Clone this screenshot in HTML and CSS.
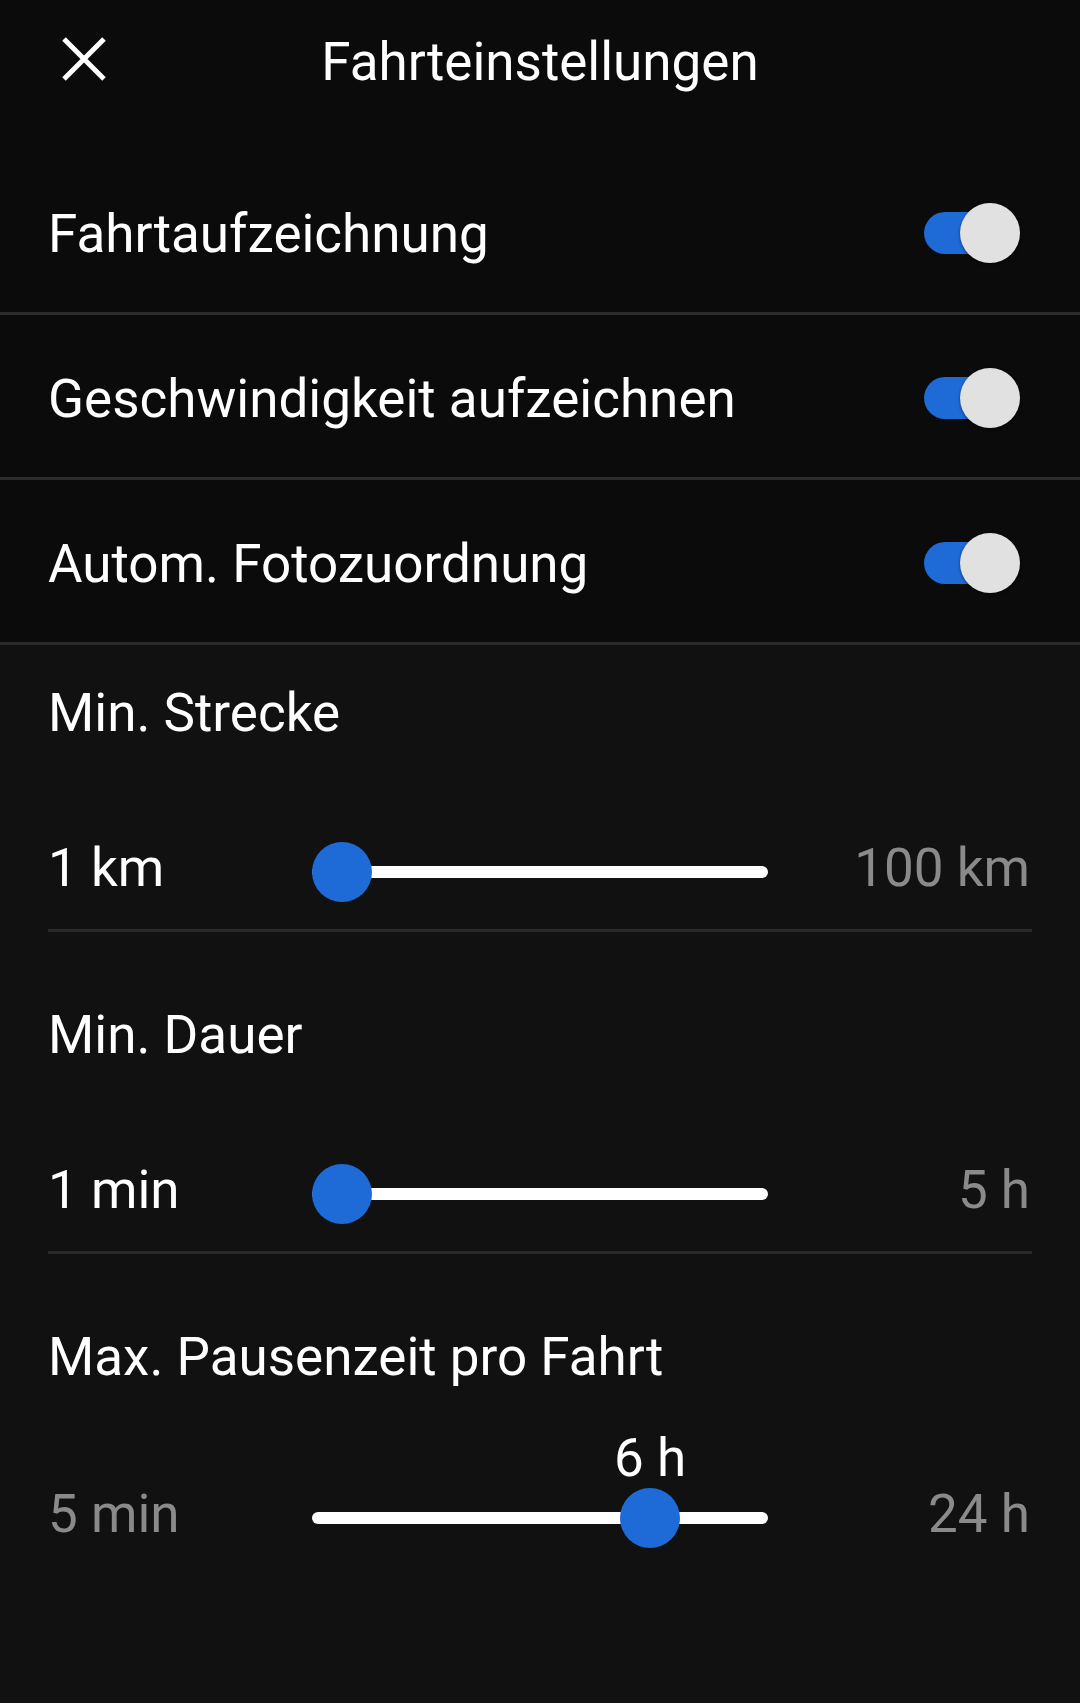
FILE: index.html
```html
<!DOCTYPE html>
<html lang="de">
<head>
<meta charset="utf-8">
<title>Fahrteinstellungen</title>
<link rel="stylesheet" href="styles.css">
</head>
<body>
<div class="screen">
  <header class="header">
    <button class="close" aria-label="Schließen">
      <svg width="44" height="44" viewBox="0 0 44 44"><path d="M2 2 L42 42 M42 2 L2 42" stroke="#fff" stroke-width="5" stroke-linecap="butt" fill="none"/></svg>
    </button>
    <h1 class="title">Fahrteinstellungen</h1>
  </header>

  <section class="toggles">
    <div class="toggle-row">
      <span class="toggle-label">Fahrtaufzeichnung</span>
      <span class="switch"><span class="switch-track"></span><span class="switch-thumb"></span></span>
    </div>
    <div class="toggle-row">
      <span class="toggle-label">Geschwindigkeit aufzeichnen</span>
      <span class="switch"><span class="switch-track"></span><span class="switch-thumb"></span></span>
    </div>
    <div class="toggle-row">
      <span class="toggle-label">Autom. Fotozuordnung</span>
      <span class="switch"><span class="switch-track"></span><span class="switch-thumb"></span></span>
    </div>
  </section>

  <section class="sliders">
    <div class="slider-block first">
      <div class="slider-title">Min. Strecke</div>
      <div class="slider-row">
        <span class="range-min">1 km</span>
        <div class="slider">
          <div class="slider-track"></div>
          <div class="slider-thumb" style="--pos:0"></div>
        </div>
        <span class="range-max">100 km</span>
      </div>
    </div>
    <div class="slider-block bordered">
      <div class="slider-title">Min. Dauer</div>
      <div class="slider-row">
        <span class="range-min">1 min</span>
        <div class="slider">
          <div class="slider-track"></div>
          <div class="slider-thumb" style="--pos:0"></div>
        </div>
        <span class="range-max">5 h</span>
      </div>
    </div>
    <div class="slider-block last">
      <div class="slider-title">Max. Pausenzeit pro Fahrt</div>
      <div class="slider-row">
        <span class="range-min muted">5 min</span>
        <div class="slider">
          <div class="slider-track"></div>
          <div class="slider-thumb" style="--pos:0.778"><span class="thumb-value">6 h</span></div>
        </div>
        <span class="range-max">24 h</span>
      </div>
    </div>
  </section>
</div>
</body>
</html>
```

FILE: styles.css
```css
* { box-sizing: border-box; }
html, body {
  margin: 0;
  padding: 0;
  background: #111111;
}
body {
  font-family: Roboto, "Noto Sans", "Liberation Sans", sans-serif;
  color: #ffffff;
  width: 1080px;
  min-height: 1703px;
}
.screen {
  min-height: 1703px;
  background: #111111;
}
.header {
  position: relative;
  height: 150px;
  background: #0b0b0b;
  display: flex;
  align-items: flex-start;
  justify-content: center;
}
.close {
  position: absolute;
  left: 62px;
  top: 37px;
  width: 44px;
  height: 44px;
  padding: 0;
  border: 0;
  background: transparent;
  display: block;
}
.close svg { display: block; }
.title {
  margin: 0;
  margin-top: 30px;
  font-size: 53px;
  line-height: 64px;
  font-weight: 400;
  letter-spacing: 0;
}
.toggles {
  background: #0b0b0b;
}
.toggle-row {
  height: 165px;
  display: flex;
  align-items: center;
  justify-content: space-between;
  padding: 0 60px 0 48px;
  border-bottom: 3px solid #2a2a2a;
}
.toggle-label {
  font-size: 53px;
  line-height: 64px;
  padding-top: 5px;
}
.switch {
  position: relative;
  width: 96px;
  height: 60px;
  display: block;
  margin-top: 3px;
}
.switch-track {
  position: absolute;
  left: 0;
  top: 9px;
  width: 84px;
  height: 42px;
  border-radius: 21px;
  background: #1e6ad6;
}
.switch-thumb {
  position: absolute;
  right: 0;
  top: 0;
  width: 60px;
  height: 60px;
  border-radius: 50%;
  background: #e1e1e1;
  box-shadow: 0 1px 3px rgba(0,0,0,0.5);
}
.sliders {
  padding: 0 48px;
}
.slider-block {
  padding-top: 71px;
  padding-bottom: 17px;
}
.slider-block.first { padding-top: 36px; }
.slider-block.first,
.slider-block.bordered {
  border-bottom: 3px solid #2a2a2a;
}
.slider-title {
  font-size: 53px;
  line-height: 64px;
}
.slider-row {
  margin-top: 87px;
  height: 80px;
  display: grid;
  grid-template-columns: 264px 1fr 264px;
  align-items: center;
  font-size: 53px;
  line-height: 64px;
}
.slider-block.last .slider-row { margin-top: 89px; }
.range-min,
.range-max {
  margin-top: -9px;
}
.range-min { color: #ffffff; }
.range-min.muted { color: #8a8a8a; }
.range-max {
  color: #8a8a8a;
  text-align: right;
  padding-right: 2px;
}
.slider {
  position: relative;
  height: 60px;
}
.slider-track {
  position: absolute;
  left: 0;
  right: 0;
  top: 24px;
  height: 12px;
  border-radius: 6px;
  background: #ffffff;
}
.slider-thumb {
  position: absolute;
  top: 0;
  left: calc(var(--pos) * (100% - 60px));
  width: 60px;
  height: 60px;
  border-radius: 50%;
  background: #1e6ad6;
}
.thumb-value {
  position: absolute;
  left: 50%;
  bottom: 100%;
  margin-bottom: -2px;
  transform: translateX(-50%);
  font-size: 53px;
  line-height: 64px;
  color: #ffffff;
  white-space: nowrap;
}
```
